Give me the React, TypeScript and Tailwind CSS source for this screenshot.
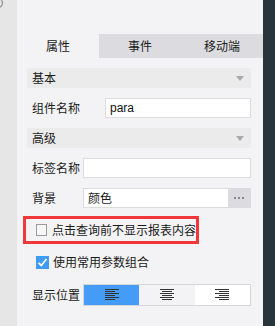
import React from 'react'

const font = { fontFamily: '"Noto Sans CJK SC", "Noto Sans", sans-serif' }

function Arrow() {
  return (
    <svg width="8" height="5" viewBox="0 0 8 5">
      <path d="M0 0 H8 L4 5 Z" fill="#a9a9ab" />
    </svg>
  )
}

function Section({ title }: { title: string }) {
  return (
    <div className="flex items-center justify-between h-[20px] bg-[#ebebec] pl-[5px] pr-[7px] text-[12px] text-[#1a1a1a]">
      <span>{title}</span>
      <Arrow />
    </div>
  )
}

function AlignIcon({ mode }: { mode: 'left' | 'center' | 'right' }) {
  const rows = [0, 1, 2, 3, 4, 5]
  return (
    <svg width="14" height="12" viewBox="0 0 14 12">
      {rows.map((i) => {
        const long = i % 2 === 0
        const w = long ? 14 : 10
        const x = mode === 'left' ? 0 : mode === 'center' ? (14 - w) / 2 : 14 - w
        return <rect key={i} x={x} y={i * 2} width={w} height="1" fill="#333" />
      })}
    </svg>
  )
}

export default function App() {
  return (
    <div className="flex w-[275px] h-[326px] overflow-hidden" style={font}>
      <div className="w-[17px] shrink-0 bg-[#e6e6e7]">
        <svg width="17" height="12" viewBox="0 0 17 12">
          <circle cx="-2" cy="3" r="4.5" fill="none" stroke="#a0a0a0" strokeWidth="1.5" />
        </svg>
      </div>

      <div className="w-[246px] shrink-0 bg-[#f3f3f5] pt-[34px]">
        <div className="grid grid-cols-3 h-[24px] text-[12px] text-[#1a1a1a]">
          <div className="flex items-center justify-center bg-[#f3f3f5]">属性</div>
          <div className="flex items-center justify-center bg-[#dcdce0]">事件</div>
          <div className="flex items-center justify-center bg-[#dcdce0]">移动端</div>
        </div>

        <div className="flex flex-col pl-[10px] pr-[12px] pt-[10px] text-[12px] text-[#1a1a1a]">
          <Section title="基本" />

          <div className="flex items-center h-[20px] mt-[10px]">
            <span className="w-[78px] pl-[5px]">组件名称</span>
            <div className="flex-1 h-full bg-white border border-[#dcdcdf] flex items-center px-[4px] text-[12px] text-[#111]" style={{ fontFamily: '"Liberation Sans", sans-serif' }}>
              para
            </div>
          </div>

          <div className="mt-[10px]">
            <Section title="高级" />
          </div>

          <div className="flex items-center h-[20px] mt-[10px]">
            <span className="w-[56px] pl-[5px]">标签名称</span>
            <div className="flex-1 h-full bg-white border border-[#dcdcdf]" />
          </div>

          <div className="flex items-center h-[20px] mt-[10px]">
            <span className="w-[56px] pl-[5px]">背景</span>
            <div className="flex-1 h-full flex border border-[#dcdcdf]">
              <div className="flex-1 bg-white flex items-center px-[4px]">颜色</div>
              <div className="w-[22px] bg-[#dcdce0] flex items-center justify-center gap-[2px]">
                <span className="w-[2px] h-[2px] bg-[#888]" />
                <span className="w-[2px] h-[2px] bg-[#888]" />
                <span className="w-[2px] h-[2px] bg-[#888]" />
              </div>
            </div>
          </div>

          <div className="flex items-center w-[176px] h-[28px] mt-[8px] ml-[-4px] border-[3px] border-[#f2373b] pl-[10px] gap-[5px]">
            <span className="w-[12px] h-[12px] border border-[#9b9b9b] bg-[#f7f7f7]" />
            <span className="whitespace-nowrap">点击查询前不显示报表内容</span>
          </div>

          <div className="flex items-center h-[20px] mt-[8px] pl-[9px] gap-[4px]">
            <span className="w-[13px] h-[13px] bg-[#3f9cf4] flex items-center justify-center">
              <svg width="11" height="11" viewBox="0 0 11 11">
                <path d="M1.5 5.8 L4.3 8.5 L9.5 2" fill="none" stroke="#fff" strokeWidth="1.8" />
              </svg>
            </span>
            <span>使用常用参数组合</span>
          </div>

          <div className="flex items-center h-[22px] mt-[12px]">
            <span className="w-[56px] pl-[5px]">显示位置</span>
            <div className="flex-1 h-full grid grid-cols-3 border border-[#d6d6d9]">
              <div className="flex items-center justify-center bg-[#449cf6]">
                <AlignIcon mode="left" />
              </div>
              <div className="flex items-center justify-center bg-[#f3f3f5]">
                <AlignIcon mode="center" />
              </div>
              <div className="flex items-center justify-center bg-white">
                <AlignIcon mode="right" />
              </div>
            </div>
          </div>
        </div>
      </div>

      <div className="w-[12px] shrink-0 bg-[#28353a]" />
    </div>
  )
}
